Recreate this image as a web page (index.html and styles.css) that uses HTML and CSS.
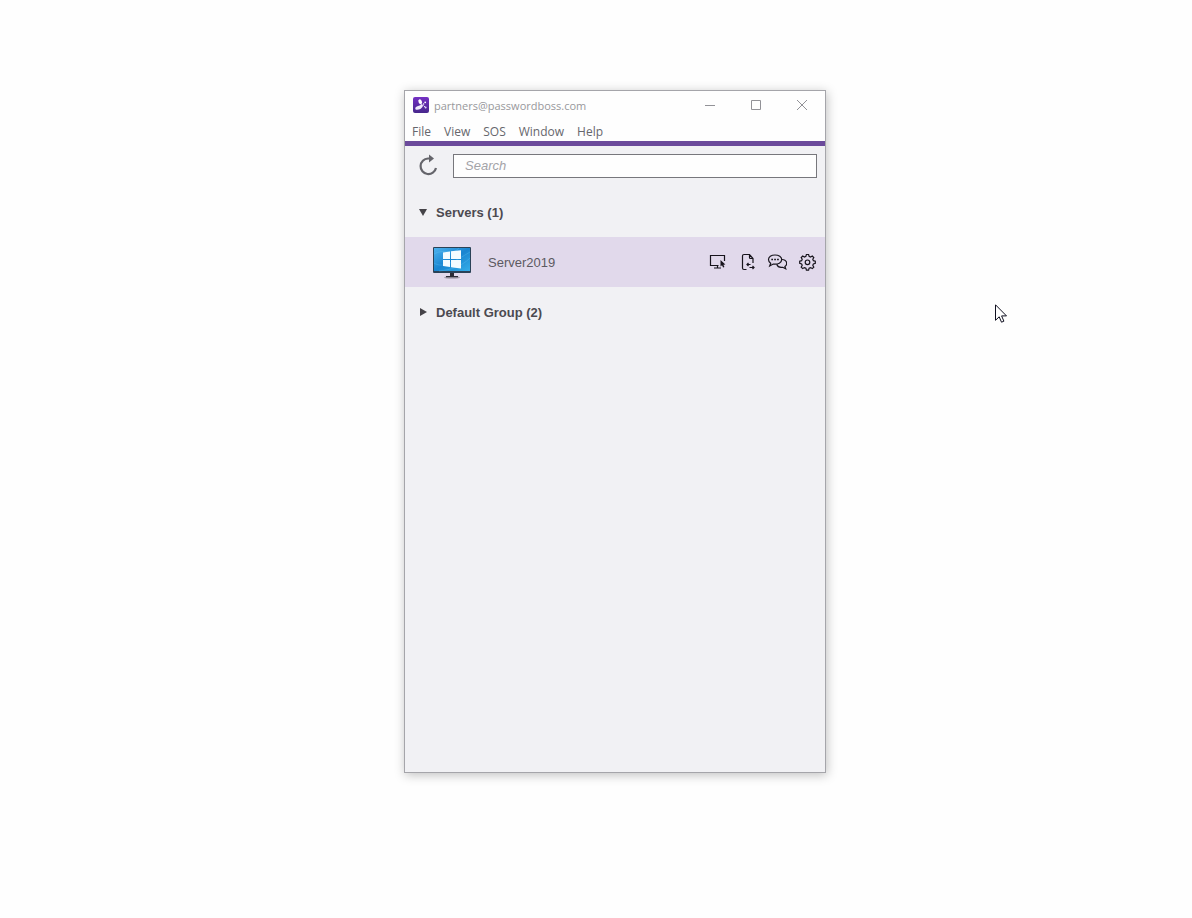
FILE: index.html
```html
<!DOCTYPE html>
<html lang="en">
<head>
    <meta charset="UTF-8">
    <meta name="viewport" content="width=device-width, initial-scale=1.0">
    <title>partners@passwordboss.com</title>
    <link rel="stylesheet" href="styles.css">
</head>
<body>
    <main class="desktop">
        <section class="window">
            <header class="titlebar">
                <svg class="app-icon" viewBox="0 0 16 16" aria-hidden="true">
                    <defs>
                        <linearGradient id="appBg" x1="0" y1="0" x2="0" y2="1">
                            <stop offset="0" stop-color="#7430c4"/>
                            <stop offset="1" stop-color="#47278c"/>
                        </linearGradient>
                    </defs>
                    <rect width="16" height="16" rx="2" fill="url(#appBg)"/>
                    <ellipse cx="7.200" cy="4.800" rx="1.700" ry="2.500" transform="rotate(-25 7.200 4.800)" fill="#fff"/>
                    <path d="M8.500 7c1.500.4 1.700 1.600 1.200 2.600-1 2.200-3.700 3.400-6.200 3.200-1.500-.2-1.600-2-.5-2.900C4.800 8.700 7 9 8.500 7z" fill="#f0eafc"/>
                    <circle cx="12.200" cy="5.300" r=".9" fill="#fff"/>
                    <circle cx="10.600" cy="7" r=".8" fill="#fff"/>
                    <circle cx="12.600" cy="10.500" r="1" fill="#e4d8f8"/>
                    <path d="M10.500 8.500l1.700 1.700" stroke="#e4d8f8"/>
                </svg>
                <h1 class="title">partners@passwordboss.com</h1>
                <div class="controls">
                    <button type="button" aria-label="Minimize">
                        <svg viewBox="0 0 10 10"><path d="M0 5.500h10"/></svg>
                    </button>
                    <button type="button" aria-label="Maximize">
                        <svg viewBox="0 0 10 10"><path d="M.5.500h9v9h-9z"/></svg>
                    </button>
                    <button type="button" aria-label="Close">
                        <svg viewBox="0 0 10 10"><path d="M0 0l10 10M10 0L0 10"/></svg>
                    </button>
                </div>
            </header>
            <nav class="menu">
                <button type="button">File</button>
                <button type="button">View</button>
                <button type="button">SOS</button>
                <button type="button">Window</button>
                <button type="button">Help</button>
            </nav>
            <div class="toolbar">
                <button type="button" class="refresh" aria-label="Refresh">
                    <svg viewBox="0 0 20 22">
                        <path d="M12 4.500H10A7.800 7.800 0 1 0 18 14" fill="none" stroke="#65656b" stroke-width="2.200"/>
                        <path d="M11 .5l5 4-5 4z" fill="#65656b"/>
                    </svg>
                </button>
                <input type="text" class="search" placeholder="Search" aria-label="Search">
            </div>
            <button type="button" class="group" aria-expanded="true">
                <svg viewBox="0 0 8 8"><path d="M0 1h8L4 8z"/></svg>
                <span>Servers (1)</span>
            </button>
            <div class="computer">
                <svg class="monitor" viewBox="0 0 40 34" aria-hidden="true">
                    <defs>
                        <linearGradient id="screen" x1="0" y1="0" x2="1" y2="1">
                            <stop offset="0" stop-color="#4db2ee"/>
                            <stop offset=".5" stop-color="#1984d0"/>
                            <stop offset="1" stop-color="#35aee9"/>
                        </linearGradient>
                    </defs>
                    <ellipse cx="20" cy="32.500" rx="8" ry="1.300" fill="#a9a3b1"/>
                    <path d="M18 27h4v4h4v1.200H14V31h4z" fill="#2b2b35"/>
                    <rect x="1" y="2" width="38" height="26" rx="1" fill="#2b4257"/>
                    <rect x="2" y="3" width="36" height="23" fill="url(#screen)"/>
                    <path d="M2 18c9 6 21-2 36-11M2 9c10-6 18 2 25-6M7 26c12-1 23-5 31-13" fill="none" stroke="#6bc7f5" stroke-opacity=".3"/>
                    <path d="M11 7.500l7-1V14h-7zM19 6.300L29 5.300V14H19zM11 15h7v7l-7-1zM19 15h10v8.500l-10-1.300z" fill="#f5fbff"/>
                </svg>
                <span class="name">Server2019</span>
                <div class="actions">
                    <button type="button" aria-label="Connect">
                        <svg viewBox="0 0 20 20">
                            <path d="M11.500 13.500H3.500v-10h14V9M10.500 13.500V16M7 16h7"/>
                            <path d="M13.500 8v6.500l1.500-1.200 1.100 2.200 1.300-.6-1-2.200 2-.2z" fill="#17141c" stroke="none"/>
                        </svg>
                    </button>
                    <button type="button" aria-label="File transfer">
                        <svg viewBox="0 0 20 20">
                            <path d="M9.500 17.500H7A1.500 1.500 0 0 1 5.500 16V4A1.500 1.500 0 0 1 7 2.500h5.500l3.500 4V11M12.500 2.500v3a1 1 0 0 0 1 1H16"/>
                            <path d="M10 12.500h3.500M11.500 11L10 12.500l1.500 1.500M12.500 15.500H17M15.500 14l1.500 1.500-1.500 1.500"/>
                        </svg>
                    </button>
                    <button type="button" aria-label="Chat">
                        <svg viewBox="0 0 20 20">
                            <path d="M8 3C4.200 3 1.500 4.900 1.500 7.600c0 1.600.8 2.800 2.200 3.600L2.700 14l3.500-2c5 .6 8.500-1.300 8.500-4.400C14.700 4.900 11.800 3 8 3z"/>
                            <path d="M14.700 7.500c3 .2 5 1.800 5 3.900 0 1.300-.7 2.400-1.800 3.100l.8 2.300-3-1.500c-3.100.6-5.200-.7-6-3"/>
                            <path d="M4.300 7.500h1.700M7.200 7.500h1.700M10.100 7.500h1.700" stroke-width="1.700"/>
                        </svg>
                    </button>
                    <button type="button" aria-label="Settings">
                        <svg viewBox="0 0 20 20">
                            <path d="M9.400 3h2.200l.5 1.900 1.400.6 1.800-1 1.500 1.600-1 1.700.6 1.400 1.900.5v2.200l-1.900.5-.6 1.400 1 1.800-1.500 1.500-1.800-1-1.400.6-.5 1.900H9.400l-.5-1.900-1.400-.6-1.800 1-1.500-1.500 1-1.800-.6-1.400-1.900-.5V9.700l1.900-.5.6-1.400-1-1.700 1.500-1.600 1.800 1 1.400-.6z" transform="translate(0 -.5)"/>
                            <circle cx="10.500" cy="10.300" r="2.300"/>
                        </svg>
                    </button>
                </div>
            </div>
            <button type="button" class="group" aria-expanded="false">
                <svg viewBox="0 0 8 8"><path d="M1 0l7 4-7 4z"/></svg>
                <span>Default Group (2)</span>
            </button>
        </section>
        <svg class="cursor" viewBox="0 0 12 19" aria-hidden="true">
            <path d="M.5.800v15.500l3.700-3.500 2.300 5.400 2.400-1-2.300-5.300h4.900z" fill="#fff" stroke="#101020"/>
        </svg>
    </main>
</body>
</html>
```
FILE: styles.css
```css
* {
    box-sizing: border-box;
}
body {
    margin: 0;
    background-color: #fefefe;
    font-family: "Liberation Sans", Arial, sans-serif;
    color: #4c4a50;
}
button {
    padding: 0;
    border: none;
    background: none;
    font: inherit;
    color: inherit;
}
svg {
    display: block;
}
.desktop {
    position: relative;
    min-height: 100vh;
}
.window {
    position: absolute;
    top: 90px;
    bottom: 145px;
    left: 404px;
    width: 422px;
    border: 1px solid #a5a5aa;
    background-color: #f1f1f4;
    box-shadow: 1px 2px 10px rgba(0, 0, 0, 0.25);
}
.titlebar {
    display: flex;
    align-items: center;
    height: 28px;
    padding-left: 8px;
    background-color: #fefefe;
}
.app-icon {
    width: 16px;
    height: 16px;
}
.title {
    margin: 0 0 0 5px;
    font: 11px "Open Sans", "Segoe UI", sans-serif;
    color: #98989c;
}
.controls {
    display: flex;
    margin-left: auto;
}
.controls button {
    display: flex;
    justify-content: center;
    align-items: center;
    width: 46px;
    height: 28px;
}
.controls svg {
    width: 10px;
    height: 10px;
    fill: none;
    stroke: #929297;
}
.menu {
    display: flex;
    gap: 13px;
    height: 27px;
    padding: 2px 7px 0;
    border-bottom: 5px solid #6b4a9b;
    background-color: #fefefe;
    font-family: "Open Sans", "Segoe UI", sans-serif;
    font-size: 12px;
    color: #66666c;
}
.toolbar {
    display: flex;
    gap: 15px;
    height: 41px;
    padding: 8px 8px 9px 13px;
}
.refresh svg {
    width: 20px;
    height: 22px;
}
.search {
    flex: 1;
    min-width: 0;
    height: 24px;
    padding: 0 11px 2px;
    border: 1px solid #77777c;
    border-radius: 0;
    background-color: #fefefe;
    font-family: inherit;
    font-size: 13px;
}
.search::placeholder {
    font-style: italic;
    color: #a3a3a8;
}
.refresh {
    align-self: flex-start;
}
.group {
    display: flex;
    align-items: center;
    gap: 9px;
    width: 100%;
    height: 50px;
    padding: 0 14px;
    font-size: 13px;
    font-weight: bold;
}
.group svg {
    width: 8px;
    height: 8px;
    fill: #454348;
}
.computer {
    display: flex;
    align-items: center;
    height: 50px;
    padding: 0 8px 0 27px;
    background-color: #e1d9eb;
}
.monitor {
    width: 40px;
    height: 34px;
}
.name {
    margin-left: 16px;
    font-size: 13px;
    color: #5c5a61;
}
.actions {
    display: flex;
    gap: 10px;
    margin-left: auto;
}
.actions svg {
    width: 20px;
    height: 20px;
    fill: none;
    stroke: #17141c;
    stroke-width: 1.2;
}
.cursor {
    position: absolute;
    top: 304px;
    left: 995px;
    width: 12px;
    height: 19px;
}
```
